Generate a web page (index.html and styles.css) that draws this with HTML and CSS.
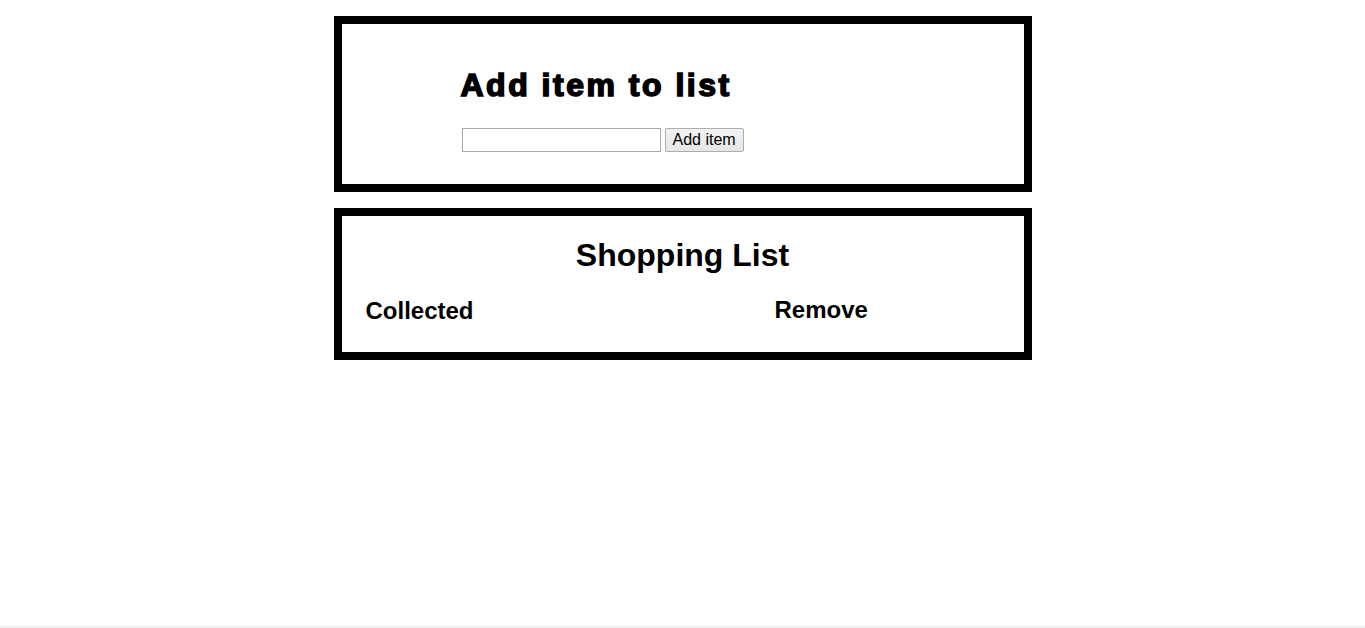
FILE: index.html
```html
<!DOCTYPE html>
<html lang="en">
<head>
<meta charset="utf-8">
<title>Shopping List</title>
<link rel="stylesheet" href="styles.css">
</head>
<body>
<main class="page">
  <section class="panel add-panel">
    <div class="add-inner">
      <h1 class="add-title">Add item to list</h1>
      <form class="add-form">
        <input class="item-input" type="text">
        <button class="add-btn" type="button">Add item</button>
      </form>
    </div>
  </section>
  <section class="panel list-panel">
    <h1 class="list-title">Shopping List</h1>
    <div class="list-head">
      <h2 class="col-title">Collected</h2>
      <h2 class="col-title col-remove">Remove</h2>
    </div>
  </section>
</main>
<div class="bottom-line"></div>
</body>
</html>
```
FILE: styles.css
```css
html, body {
  margin: 0;
  padding: 0;
}
body {
  min-height: 100vh;
  display: flex;
  flex-direction: column;
  background: #ffffff;
  color: #000000;
  font-family: "Liberation Sans", Arial, sans-serif;
}
.page {
  display: flex;
  flex-direction: column;
  align-items: center;
  gap: 16px;
  padding-top: 16px;
}
.panel {
  box-sizing: border-box;
  width: 698px;
  border: 8px solid #000000;
}
.add-panel {
  padding: 43px 0 32px 119px;
}
.add-title {
  margin: 0 0 25px 0;
  font-size: 32px;
  line-height: 36px;
  font-weight: 700;
  letter-spacing: 2.5px;
  -webkit-text-stroke: 1.6px #000000;
}
.add-form {
  display: flex;
  gap: 4px;
  margin: 0 0 0 1px;
}
.item-input {
  box-sizing: border-box;
  width: 199px;
  height: 24px;
  margin: 0;
  padding: 1px 2px;
  border: 1px solid #a9a9a9;
  background: #ffffff;
  font-family: "Liberation Sans", Arial, sans-serif;
  font-size: 13px;
}
.add-btn {
  box-sizing: border-box;
  height: 24px;
  margin: 0;
  padding: 0 7px;
  border: 1px solid #adadad;
  border-radius: 2px;
  background: linear-gradient(#f2f2f2, #e6e6e6);
  color: #000000;
  font-family: "Liberation Sans", Arial, sans-serif;
  font-size: 16px;
  line-height: 20px;
}
.list-panel {
  padding: 21px 0 27px 24px;
}
.list-title {
  margin: 0 0 24px -24px;
  text-align: center;
  font-size: 32px;
  line-height: 36px;
  font-weight: 700;
}
.list-head {
  display: grid;
  grid-template-columns: 409px auto;
}
.col-title {
  margin: 0;
  font-size: 24px;
  line-height: 28px;
  font-weight: 700;
}
.col-remove {
  margin-top: -1px;
}
.bottom-line {
  margin-top: auto;
  height: 2px;
  background: #eeeeee;
}
```
